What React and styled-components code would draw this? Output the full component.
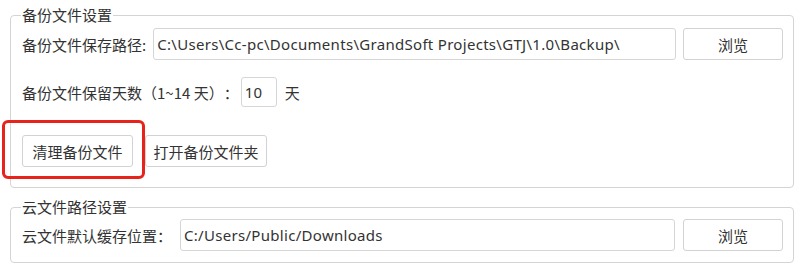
import React from 'react'
import styled, { createGlobalStyle } from 'styled-components'

const GlobalStyle = createGlobalStyle`
body{
    margin:0;
    background:#fff;
    font-family: "Noto Sans", "Noto Sans CJK SC", sans-serif;
    color:#333;
    text-spacing-trim: space-all;
}
`

const Page = styled.div`
width:804px;
height:270px;
box-sizing:border-box;
padding:6px 10px 0 10px;
display:flex;
flex-direction:column;
gap:10px;
overflow:hidden;
`

const Group = styled.fieldset`
margin:0;
border:1px solid #d4d4d4;
border-radius:4px;
padding:${p => p.$pt}px 10px ${p => p.$pb}px 11px;
display:flex;
flex-direction:column;
`

const Legend = styled.legend`
padding:0 1px;
margin-left:-1px;
font-size:15px;
line-height:18px;
color:#333;
font-family: "Noto Sans CJK SC", sans-serif;
`

const Row = styled.div`
display:flex;
align-items:center;
height:${p => p.$h || 32}px;
margin-top:${p => p.$mt || 0}px;
gap:${p => p.$gap || 8}px;
`

const Label = styled.span`
font-size:15px;
font-family: "Noto Sans CJK SC", sans-serif;
white-space:nowrap;
color:#333;
text-spacing-trim: space-all;
`

const Unit = styled(Label)`
margin-left:6px;
`

const TextBox = styled.input`
box-sizing:border-box;
height:100%;
flex:${p => (p.$w ? 'none' : '1')};
width:${p => (p.$w ? p.$w + 'px' : 'auto')};
min-width:0;
border:1px solid #d6d6d6;
border-radius:3px;
padding:0 3px;
font-family: "Noto Sans", "Noto Sans CJK SC", sans-serif;
font-size:15px;
letter-spacing:0.3px;
color:#333;
background:#fff;
outline:none;
`

const Button = styled.button`
box-sizing:border-box;
height:32px;
width:${p => p.$w}px;
flex:none;
border:1px solid #d2d2d2;
border-radius:3px;
background:#fff;
padding:0;
font-family: "Noto Sans CJK SC", sans-serif;
font-size:15px;
color:#333;
cursor:pointer;
`

const Marked = styled.span`
position:relative;
display:inline-flex;
&::after{
    content:'';
    position:absolute;
    top:-15px;
    left:-20px;
    right:-12px;
    bottom:-12px;
    border:3px solid #e8231c;
    border-radius:6px;
    pointer-events:none;
}
`

export default function App() {
    return (
        <>
            <GlobalStyle />
            <Page>
                <Group $pt={4} $pb={20}>
                    <Legend>备份文件设置</Legend>
                    <Row $gap={7}>
                        <Label>备份文件保存路径:</Label>
                        <TextBox readOnly value={'C:\\Users\\Cc-pc\\Documents\\GrandSoft Projects\\GTJ\\1.0\\Backup\\'} />
                        <Button $w={100}>浏览</Button>
                    </Row>
                    <Row $h={30} $mt={17} $gap={2}>
                        <Label>备份文件保留天数（1~14 天）：</Label>
                        <TextBox readOnly $w={36} value="10" />
                        <Unit>天</Unit>
                    </Row>
                    <Row $mt={28} $gap={12}>
                        <Marked>
                            <Button $w={111}>清理备份文件</Button>
                        </Marked>
                        <Button $w={122}>打开备份文件夹</Button>
                    </Row>
                </Group>
                <Group $pt={3} $pb={11}>
                    <Legend>云文件路径设置</Legend>
                    <Row>
                        <Label>云文件默认缓存位置：</Label>
                        <TextBox readOnly value="C:/Users/Public/Downloads" />
                        <Button $w={100}>浏览</Button>
                    </Row>
                </Group>
            </Page>
        </>
    )
}
